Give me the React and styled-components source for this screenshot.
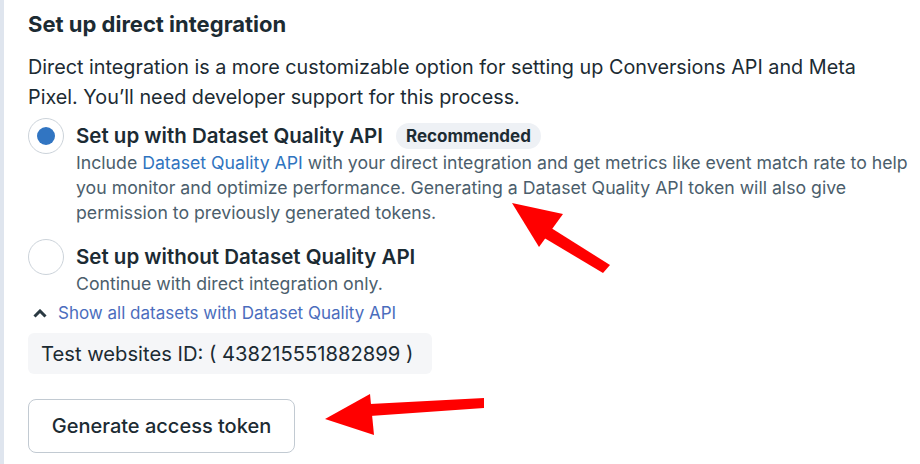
import React from "react";
import styled, { createGlobalStyle } from "styled-components";

const Global = createGlobalStyle`
  html, body { margin: 0; padding: 0; background: #ffffff; }
  body { font-family: "Inter", "Roboto", "Liberation Sans", sans-serif; color: #1c2b33; }
`;

const Page = styled.div`
  position: relative;
  width: 920px;
  height: 464px;
  overflow: hidden;
  display: flex;
  background: #ffffff;
`;

const SideStrip = styled.div`
  width: 4px;
  flex: none;
  background: #dfe5ee;
`;

const Content = styled.div`
  flex: 1;
  padding: 10px 0 0 24px;
  display: flex;
  flex-direction: column;
  align-items: flex-start;
`;

const Title = styled.h2`
  margin: 0;
  font-size: 22px;
  line-height: 28px;
  font-weight: 700;
  color: #1c2b33;
`;

const Intro = styled.p`
  margin: 14px 0 0;
  font-size: 19.8px;
  line-height: 30px;
  color: #1c2b33;
  width: 870px;
`;

const Option = styled.div`
  display: flex;
  align-items: flex-start;
  gap: 12px;
  margin-top: ${(p) => p.$top}px;
`;

const Radio = styled.span`
  flex: none;
  box-sizing: border-box;
  width: 36px;
  height: 36px;
  margin-top: -4px;
  border-radius: 50%;
  border: 1px solid #ccd3da;
  background: #fff;
  display: flex;
  align-items: center;
  justify-content: center;
  &::after {
    content: "";
    display: ${(p) => (p.$checked ? "block" : "none")};
    width: 18px;
    height: 18px;
    border-radius: 50%;
    background: #3175c2;
  }
`;

const OptionText = styled.div`
  display: flex;
  flex-direction: column;
`;

const LabelRow = styled.div`
  display: flex;
  align-items: center;
  gap: 13px;
  height: 28px;
`;

const Label = styled.span`
  font-size: 20.5px;
  line-height: 28px;
  font-weight: 600;
  color: #1c2b33;
`;

const Badge = styled.span`
  font-size: 17px;
  line-height: 26px;
  font-weight: 700;
  color: #1c2b33;
  background: #eef1f5;
  border-radius: 13px;
  padding: 0 10px;
`;

const Desc = styled.p`
  margin: 0;
  font-size: 17.7px;
  line-height: 25px;
  color: #4b5e6c;
  width: 836px;
`;

const InlineLink = styled.span`
  color: #2f74c0;
  cursor: pointer;
`;

const Disclosure = styled.button`
  margin-top: 5px;
  border: 0;
  background: none;
  padding: 0 0 0 5px;
  display: flex;
  align-items: center;
  gap: 11px;
  font-family: inherit;
  font-size: 17px;
  line-height: 24px;
  color: #4b6dbd;
  cursor: pointer;
`;

const IdBox = styled.div`
  margin-top: 8px;
  box-sizing: border-box;
  width: 404px;
  height: 41px;
  padding: 0 0 0 13px;
  display: flex;
  align-items: center;
  background: #f5f6f8;
  border-radius: 6px;
  font-size: 20.2px;
  white-space: nowrap;
  color: #1c2b33;
`;

const Button = styled.button`
  margin-top: 25px;
  box-sizing: border-box;
  width: 267px;
  height: 54px;
  border: 1px solid #c2cad2;
  border-radius: 8px;
  background: #ffffff;
  font-family: inherit;
  font-size: 20px;
  font-weight: 500;
  color: #1c2b33;
  cursor: pointer;
`;

const Overlay = styled.svg`
  position: absolute;
  left: 0;
  top: 0;
  pointer-events: none;
`;

function Chevron() {
  return (
    <svg width="14" height="9" viewBox="0 0 14 9">
      <path d="M1.5 7.5 L7 2 L12.5 7.5" fill="none" stroke="#2a3942" strokeWidth="3" strokeLinejoin="miter" />
    </svg>
  );
}

export default function App() {
  return (
    <>
      <Global />
      <Page>
        <SideStrip />
        <Content>
          <Title>Set up direct integration</Title>
          <Intro>
            Direct integration is a more customizable option for setting up Conversions API and Meta
            Pixel. You’ll need developer support for this process.
          </Intro>
          <Option $top={10}>
            <Radio $checked />
            <OptionText>
              <LabelRow>
                <Label>Set up with Dataset Quality API</Label>
                <Badge>Recommended</Badge>
              </LabelRow>
              <Desc>
                Include <InlineLink>Dataset Quality API</InlineLink> with your direct integration and get metrics like event match rate to help
                you monitor and optimize performance. Generating a Dataset Quality API token will also give
                permission to previously generated tokens.
              </Desc>
            </OptionText>
          </Option>
          <Option $top={18}>
            <Radio />
            <OptionText>
              <LabelRow>
                <Label>Set up without Dataset Quality API</Label>
              </LabelRow>
              <Desc>Continue with direct integration only.</Desc>
            </OptionText>
          </Option>
          <Disclosure>
            <Chevron />
            Show all datasets with Dataset Quality API
          </Disclosure>
          <IdBox>Test websites ID: ( 438215551882899 )</IdBox>
          <Button>Generate access token</Button>
        </Content>
        <Overlay width="920" height="464" viewBox="0 0 920 464">
          <polygon points="512,203 563,214 539,247" fill="#ff0000" />
          <polygon points="548,226 610,265 603,273 541,236" fill="#ff0000" />
          <polygon points="325,419 370,394 374,435" fill="#ff0000" />
          <polygon points="370,404 484,398 484,408 370,416" fill="#ff0000" />
        </Overlay>
      </Page>
    </>
  );
}
